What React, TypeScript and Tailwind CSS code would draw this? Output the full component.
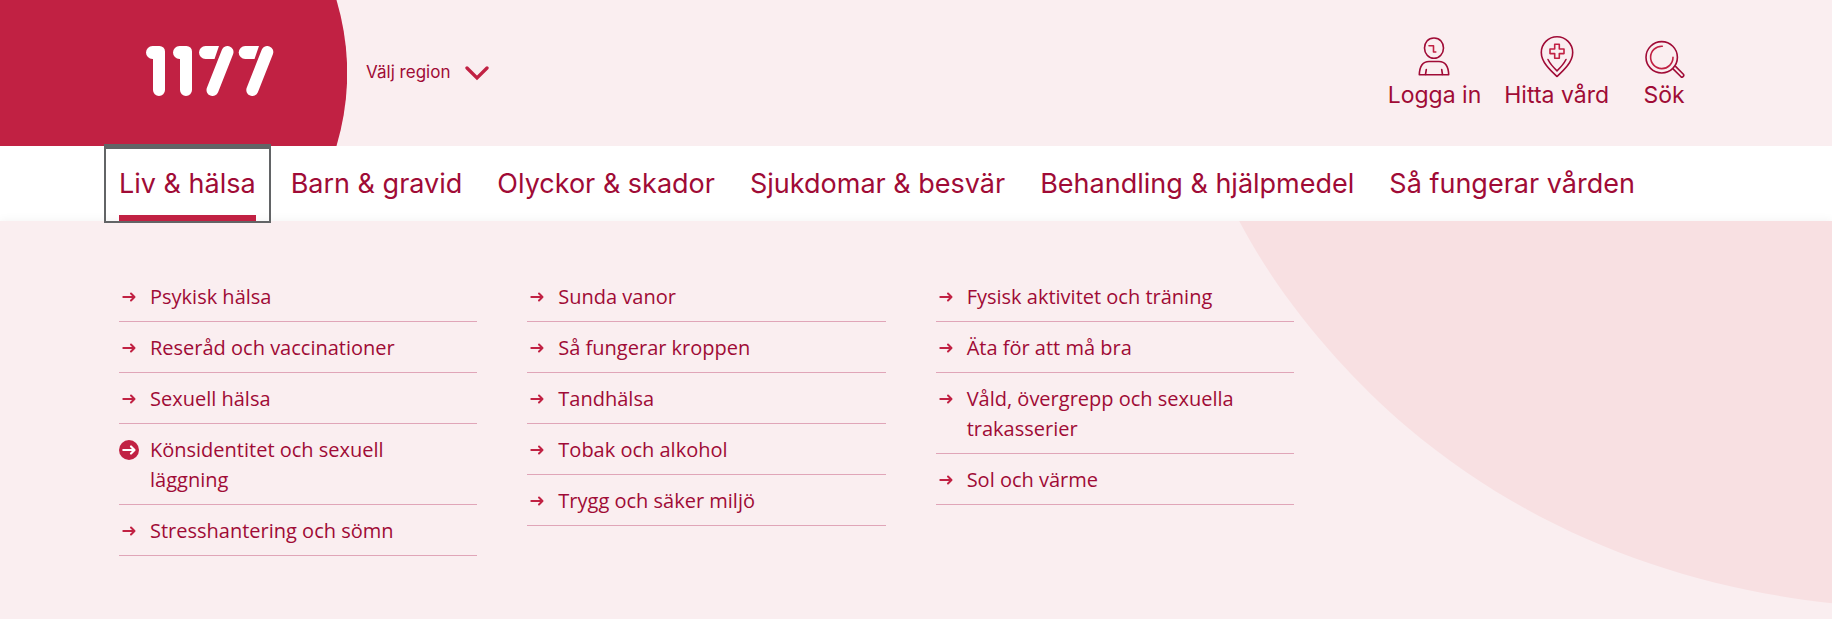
import type { ReactNode } from "react";

type Item = { label: string; active?: boolean };

const navItems: Item[] = [
  { label: "Liv & hälsa", active: true },
  { label: "Barn & gravid" },
  { label: "Olyckor & skador" },
  { label: "Sjukdomar & besvär" },
  { label: "Behandling & hjälpmedel" },
  { label: "Så fungerar vården" },
];

const columns: Item[][] = [
  [
    { label: "Psykisk hälsa" },
    { label: "Reseråd och vaccinationer" },
    { label: "Sexuell hälsa" },
    { label: "Könsidentitet och sexuell läggning", active: true },
    { label: "Stresshantering och sömn" },
  ],
  [
    { label: "Sunda vanor" },
    { label: "Så fungerar kroppen" },
    { label: "Tandhälsa" },
    { label: "Tobak och alkohol" },
    { label: "Trygg och säker miljö" },
  ],
  [
    { label: "Fysisk aktivitet och träning" },
    { label: "Äta för att må bra" },
    { label: "Våld, övergrepp och sexuella trakasserier" },
    { label: "Sol och värme" },
  ],
];

function Logo() {
  return (
    <svg viewBox="0 0 128 50" className="h-[50px] w-[128px]" fill="#fff" aria-hidden="true">
      <path d="M6.500 0H13.500A5.500 5.500 0 0 1 19 5.500V44A6 6 0 0 1 7 44V13H6.500A6.500 6.500 0 0 1 6.500 0Z" />
      <path d="M33.500 0H40.500A5.500 5.500 0 0 1 46 5.500V44A6 6 0 0 1 34 44V13H33.500A6.500 6.500 0 0 1 33.500 0Z" />
      <path d="M59.500 0H73L68.500 13H59.500A6.500 6.500 0 0 1 59.500 0Z" />
      <path d="M99.200 0H113L108.500 13H99.200A6.500 6.500 0 0 1 99.200 0Z" />
      <path d="M81.500 6L66.500 44M121.300 6L106.300 44" stroke="#fff" strokeWidth="12" strokeLinecap="round" />
    </svg>
  );
}

function Icon({ children }: { children: ReactNode }) {
  return (
    <svg
      viewBox="0 0 42 42"
      className="h-[42px] w-[42px]"
      fill="none"
      stroke="#a00b36"
      strokeWidth="1.600"
      strokeLinecap="round"
      strokeLinejoin="round"
      aria-hidden="true"
    >
      {children}
    </svg>
  );
}

function UserIcon() {
  return (
    <Icon>
      <path d="M21 2C27 2 30.500 6.500 30.500 12C30.500 17.500 26.500 22.300 21 22.300S11.500 17.500 11.500 12C11.500 6.500 15 2 21 2Z" />
      <path d="M16 9.700H20.500V16H22.800" stroke="#c12143" />
      <path d="M6.300 38.800C6.500 33 7.500 25.500 16 25.500H26C34.500 25.500 35.500 33 35.700 38.800Z" />
      <path d="M12.500 38.500L13.300 33.500M29.500 38.500L28.700 33.500" />
    </Icon>
  );
}

function PinIcon() {
  return (
    <Icon>
      <path d="M21 40.500C14 34 5.300 26 5.300 16.500A15.700 15.700 0 0 1 36.700 16.500C36.700 26 28 34 21 40.500Z" />
      <path d="M18.700 8.300H23.300V13H28V17.600H23.300V22.300H18.700V17.600H14V13H18.700Z" stroke="#c12143" />
      <path d="M12 23.500C14 27.500 17.500 31.500 21 34.800C24.500 31.500 28 27.500 30 23.500" />
    </Icon>
  );
}

function SearchIcon() {
  return (
    <Icon>
      <circle cx="18.700" cy="21.300" r="15.700" />
      <path d="M19.300 10.200A11.200 11.200 0 1 0 30 21.300" stroke="#c12143" />
      <path d="M32.800 30.600L40.400 38.200C41.600 39.700 39.500 42 38 40.800L30.300 33.100" />
    </Icon>
  );
}

function Arrow({ active }: { active?: boolean }) {
  return (
    <svg viewBox="0 0 20 20" className="mt-[5px] h-5 w-5 shrink-0" fill="none" aria-hidden="true">
      {active && <circle cx="10" cy="10" r="10" fill="#c12143" />}
      <path
        d="M4.300 10H15.200M12 6.500L15.500 10L12 13.500"
        stroke={active ? "#fff" : "#c12143"}
        strokeWidth={active ? 2.200 : 2}
        strokeLinecap="round"
        strokeLinejoin="round"
      />
    </svg>
  );
}

const actions = [
  { label: "Logga in", icon: <UserIcon /> },
  { label: "Hitta vård", icon: <PinIcon /> },
  { label: "Sök", icon: <SearchIcon /> },
];

export default function App() {
  return (
    <div className="min-h-screen overflow-hidden bg-[#faeef0] font-['Inter',sans-serif] text-[#a00b36]">
      <header className="relative flex h-[146px] items-center overflow-hidden pr-[136px] pl-[146px]">
        <svg viewBox="0 0 347 146" className="absolute top-0 left-0 h-[146px] w-[347px]" aria-hidden="true">
          <path d="M0 0H336.500A259 259 0 0 1 336.500 146H0Z" fill="#c12143" />
        </svg>
        <a href="#" aria-label="1177" className="relative pb-1">
          <Logo />
        </a>
        <button type="button" className="ml-[92px] flex items-center gap-[15px] text-[17px]">
          Välj region
          <svg viewBox="0 0 24 16" className="h-4 w-6" fill="none" aria-hidden="true">
            <path d="M2 3L12 13L22 3" stroke="#c12143" strokeWidth="3.300" strokeLinecap="round" />
          </svg>
        </button>
        <div className="ml-auto flex gap-[23px] pb-[2px]">
          {actions.map((a) => (
            <a
              key={a.label}
              href="#"
              className="flex min-w-16 flex-col items-center text-[23px] leading-7"
            >
              {a.icon}
              <span className="mt-[3px]">{a.label}</span>
            </a>
          ))}
        </div>
      </header>

      <nav className="flex h-[75px] gap-[9px] bg-white px-[106px] text-[27px]">
        {navItems.map((n) => (
          <button
            key={n.label}
            type="button"
            className={
              n.active
                ? "relative z-10 flex border-t-[3px] border-[#626466] px-[13px] outline-2 outline-[#626466]"
                : "flex border-t-[3px] border-transparent px-[13px]"
            }
          >
            <span
              className={
                n.active
                  ? "flex h-full items-center border-b-[6px] border-[#c12143] pt-1"
                  : "flex h-full items-center border-b-[6px] border-transparent pt-1"
              }
            >
              {n.label}
            </span>
          </button>
        ))}
      </nav>

      <main className="relative min-h-[398px] bg-[#faeef0] px-[119px] pt-[50px] pb-[63px] shadow-[0_0_10px_rgba(0,0,0,0.06)]">
        <svg viewBox="0 0 600 398" className="absolute top-0 right-0 h-[398px] w-[600px]" aria-hidden="true">
          <path
            d="M7.200 0C49 80 114.700 154.700 174.700 205.700C304.700 315.700 455 366.300 600 382.300V0Z"
            fill="#f8e0e2"
          />
        </svg>
        <div className="relative grid max-w-[1175px] grid-cols-3 items-start gap-[50px] font-['Open_Sans',sans-serif] text-xl leading-[30px]">
          {columns.map((col) => (
            <ul key={col[0].label}>
              {col.map((item) => (
                <li key={item.label} className="border-b border-[#e0a5b8]">
                  <a href="#" className="flex gap-[11px] pt-[11px] pr-5 pb-[9px]">
                    <Arrow active={item.active} />
                    {item.label}
                  </a>
                </li>
              ))}
            </ul>
          ))}
        </div>
      </main>
    </div>
  );
}
